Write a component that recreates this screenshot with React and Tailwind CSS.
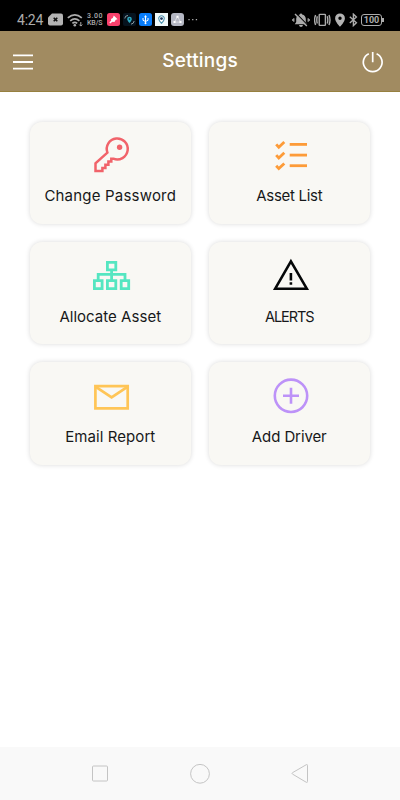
function KeyIcon() {
    return (
        <svg width="40" height="40" viewBox="0 0 40 40" fill="none" stroke="#f1636a" strokeWidth="2.5">
            <path d="M16.4 17.6 4.5 28.2v7.9h6.9v-3.2h3v-3.1h3v-3.2h2.9v-2.9h2A10.5 10.5 0 1 0 16.4 17.6Z" />
            <circle cx="28.6" cy="12.2" r="2.7" fill="#f1636a" stroke="none" />
        </svg>
    );
}

function ListIcon() {
    return (
        <svg width="40" height="40" viewBox="0 0 40 40" fill="none" stroke="#fd9b38" strokeWidth="2.8">
            {[0, 10.7, 21.3].map(y => (
                <g key={y} transform={`translate(0 ${y})`}>
                    <path d="m6.2 9.4 2.6 2.9 5.5-5.2" />
                    <path d="M19.7 9.4H37" />
                </g>
            ))}
        </svg>
    );
}

function TreeIcon() {
    return (
        <svg width="40" height="40" viewBox="0 0 40 40" fill="none" stroke="#55e6c1" strokeWidth="2.8">
            <path d="M16.4 7.4h8.4v7.4h-8.4zM3.4 25.7h7.7v8h-7.7zM16.4 25.7h8.4v8h-8.4zM30.2 25.7h7.5v8h-7.5z" />
            <path d="M20.6 15v10M7.2 25v-5.7H34V25" />
        </svg>
    );
}

function AlertIcon() {
    return (
        <svg width="40" height="40" viewBox="0 0 40 40" fill="none" stroke="#050708" strokeWidth="2.6">
            <path d="M20.9 6.4 5.2 33.7h31.6Z" />
            <path d="M20.9 18v7.4M20.9 27.2v2.6" />
        </svg>
    );
}

function MailIcon() {
    return (
        <svg width="40" height="40" viewBox="0 0 40 40" fill="none" stroke="#ffc556" strokeWidth="2.7">
            <path d="M4.4 10.2h32.3v22.1H4.4z" />
            <path d="m4.8 10.8 15.8 10.6 15.8-10.6" />
        </svg>
    );
}

function AddIcon() {
    return (
        <svg width="40" height="40" viewBox="0 0 40 40" fill="none" stroke="#bd92f8" strokeWidth="2.6">
            <circle cx="21" cy="19.8" r="16.2" />
            <path d="M21 11.8v16M13 19.8h16" />
        </svg>
    );
}

const tiles = [
    { title: "Change Password", icon: KeyIcon, spacing: "text-[15px] tracking-[0.2px]" },
    { title: "Asset List", icon: ListIcon, spacing: "text-[15px] tracking-[-0.3px]" },
    { title: "Allocate Asset", icon: TreeIcon, spacing: "text-[15px] tracking-[0.03px]" },
    { title: "ALERTS", icon: AlertIcon, spacing: "text-[14.5px] tracking-[-1.1px]" },
    { title: "Email Report", icon: MailIcon, spacing: "text-[15px] tracking-[0.08px]" },
    { title: "Add Driver", icon: AddIcon, spacing: "text-[15px] tracking-[-0.1px]" },
];

function StatusBar() {
    return (
        <div className="flex h-[31px] items-center bg-black pt-[8px] pl-[17px] text-[#acacac]">
            <span className="w-[31px] pt-px font-['Roboto',sans-serif] text-[14px] leading-none tracking-[-0.2px]">4:24</span>
            <svg width="15" height="13" viewBox="0 0 15 13">
                <path d="M4 0.5h9a2 2 0 0 1 2 2v8a2 2 0 0 1-2 2H2a2 2 0 0 1-2-2V4.5Z" fill="#b4b4b4" />
                <path d="m5.7 4.7 3.6 3.6m0-3.6L5.7 8.3" stroke="#111" strokeWidth="1.6" />
            </svg>
            <svg className="ml-1" width="17" height="14" viewBox="0 0 17 14" fill="none" stroke="#acacac" strokeWidth="1.7">
                <path d="M.8 4.8q7-6 14 0M3.2 7.8q4.6-4 9.2 0M5.4 10.4q2.4-2 4.8 0" />
                <circle cx="7.8" cy="12.2" r="1.3" fill="#acacac" stroke="none" />
                <path d="M13.8 9v4m-1.5-1.4 1.5 1.5 1.5-1.5" strokeWidth="1" />
            </svg>
            <span className="ml-[3px] flex w-[16px] flex-col font-['Roboto',sans-serif] text-[7px] leading-[7px] font-medium whitespace-nowrap">
                <span className="tracking-[0.5px]">3.00</span>
                <span className="tracking-[-0.1px]">KB/S</span>
            </span>
            <svg className="ml-[4px]" width="13" height="13" viewBox="0 0 13 13">
                <rect width="13" height="13" rx="2.5" fill="#fa416c" />
                <path d="m6.8 2.6 3.8 3.6-1.8.6-1.4 2.2-2-.2-2.2 1.6-.8-.8 1.8-2-.2-1.6 1.8-1Z" fill="#fff" />
            </svg>
            <svg className="ml-[3px]" width="13" height="13" viewBox="0 0 13 13">
                <rect width="13" height="13" rx="2" fill="#06131e" />
                <path d="M6.5 3.7a2.3 2.3 0 0 1 2.3 2.3c0 1.7-2.3 4-2.3 4S4.2 7.7 4.2 6a2.3 2.3 0 0 1 2.3-2.3Z" fill="#2faac0" />
                <circle cx="6.5" cy="6" r=".8" fill="#06131e" />
                <path d="M1.8 5.5q0-3 3.2-3M11.2 8q-.4 2.8-3.2 3.2" stroke="#8c9ba1" fill="none" />
            </svg>
            <svg className="ml-[3px]" width="13" height="13" viewBox="0 0 13 13">
                <rect width="13" height="13" rx="2.5" fill="#087cf9" />
                <path d="M6.5 3v7M4 5v2.3l2.5 1.2L9 7.3V5" stroke="#fff" fill="none" />
                <path d="M5 4.2 6.5 2 8 4.2Z" fill="#fff" />
                <circle cx="6.5" cy="10.3" r="1" fill="#fff" />
            </svg>
            <svg className="ml-[3px]" width="13" height="13" viewBox="0 0 13 13">
                <rect width="13" height="13" fill="#eef8fa" />
                <path d="M6.5 2.7a2.8 2.8 0 0 1 2.8 2.8c0 2-2.8 4.8-2.8 4.8S3.7 7.5 3.7 5.5a2.8 2.8 0 0 1 2.8-2.8Z" fill="#fff" stroke="#4b93ae" strokeWidth="1.1" />
                <circle cx="6.5" cy="5.6" r="1.4" fill="#213f67" />
            </svg>
            <svg className="ml-[3px]" width="13" height="13" viewBox="0 0 13 13">
                <rect width="13" height="13" rx="3" fill="#b4b7c3" />
                <path d="m6.5 3.3-3 5.8m3-5.8 3 5.8m-6 0h6" stroke="#e4e5e9" strokeWidth=".8" />
                <path d="M5.5 2.8h2v2h-2zM2.5 8h2v2h-2zM8.5 8h2v2h-2z" fill="#fff" />
            </svg>
            <svg className="ml-1" width="10" height="13" viewBox="0 0 10 13" fill="#acacac">
                <path d="M.4 6h1.3v1.3H.4zM4.1 6h1.3v1.3H4.1zM7.8 6h1.3v1.3H7.8z" />
            </svg>
            <svg className="ml-[94px]" width="18" height="14" viewBox="0 0 18 14">
                <path d="M2.8 11.3 4.2 9V5.8A4.8 4.8 0 0 1 7.8 1.6a1.2 1.2 0 0 1 2.4 0 4.8 4.8 0 0 1 3.6 4.2V9l1.4 2.3Z" fill="#acacac" />
                <path d="M7 12h4q-.4 1.9-2 1.9T7 12Z" fill="#acacac" />
                <path d="M1.8 5.2v3.6M.5 6.2v1.6M16.2 5.2v3.6M17.5 6.2v1.6" stroke="#acacac" strokeWidth="1.2" />
                <path d="m4.2.4 11.4 11.8" stroke="#000" strokeWidth="1.2" />
                <path d="m3 1 11.8 12" stroke="#acacac" strokeWidth="1.4" />
            </svg>
            <svg className="ml-1" width="17" height="14" viewBox="0 0 17 14" fill="none" stroke="#acacac" strokeWidth="1.4">
                <rect x="5.2" y="1.4" width="6.2" height="11" rx=".7" />
                <path d="M3.3 3.3q-1 3.7 0 7.2M13.3 3.3q1 3.7 0 7.2M1.6 2q-2 5 0 10M15 2q2 5 0 10" />
            </svg>
            <svg className="ml-1" width="10" height="14" viewBox="0 0 10 14">
                <path fillRule="evenodd" d="M5 .4a4.9 4.9 0 0 1 4.9 4.9C9.9 9 5 13.8 5 13.8S.1 9 .1 5.3A4.9 4.9 0 0 1 5 .4Zm0 3.2a1.7 1.7 0 1 0 0 3.4 1.7 1.7 0 0 0 0-3.4Z" fill="#b4b4b4" />
            </svg>
            <svg className="ml-1" width="9" height="14" viewBox="0 0 9 14" fill="none" stroke="#acacac" strokeWidth="1.4">
                <path d="m.8 3.8 6.6 6-3 2.8V1.2l3 2.9-6.6 6" />
            </svg>
            <div className="ml-[3px] flex h-[12px] w-[21px] items-center justify-center rounded-[3px] border border-[#acacac] pt-px font-['Roboto',sans-serif] text-[9px] leading-none font-bold">
                100
            </div>
            <div className="h-1 w-[1.5px] bg-[#acacac]" />
        </div>
    );
}

function Header() {
    return (
        <header className="flex h-[61px] items-center justify-between border-b border-[#97803f] bg-[#a18b61] pr-[16px] pl-[13px] text-white">
            <svg width="20" height="20" viewBox="0 0 20 20" stroke="white" strokeWidth="1.8">
                <path d="M0 4.3h20M0 11h20M0 17.7h20" />
            </svg>
            <h1 className="mb-px ml-[6px] font-['Inter','Open_Sans',sans-serif] text-[19px] leading-none font-medium tracking-[0.2px]">Settings</h1>
            <svg width="23" height="23" viewBox="0 0 23 23" fill="none" stroke="white" strokeWidth="1.7">
                <path d="M7.8 3.7a9.4 9.4 0 1 0 7.8 0M11.7 2.1v10.2" />
            </svg>
        </header>
    );
}

function Tile({ tile }) {
    const Icon = tile.icon;

    return (
        <button
            type="button"
            className="flex flex-col items-center rounded-[12px] bg-[#f9f8f4] pt-[13.5px] shadow-[0_0_5px_rgba(0,0,0,0.15)]"
        >
            <span className="ml-px block h-10">
                <Icon />
            </span>
            <span className={`mt-[11.3px] font-['Inter','Open_Sans',sans-serif] leading-5 whitespace-nowrap text-[#17181a] ${tile.spacing}`}>
                {tile.title}
            </span>
        </button>
    );
}

function NavBar() {
    return (
        <nav className="flex h-[53px] items-center justify-between bg-[#f9f9f9] px-[90px]">
            <svg width="20" height="20" viewBox="0 0 20 20" fill="none" stroke="#c4c4c4">
                <rect x="2.5" y="2" width="15" height="15" rx="1" />
            </svg>
            <svg width="20" height="20" viewBox="0 0 20 20" fill="none" stroke="#c4c4c4">
                <circle cx="10" cy="9.8" r="9.4" />
            </svg>
            <svg width="20" height="20" viewBox="0 0 20 20" fill="none" stroke="#c4c4c4" strokeLinejoin="round">
                <path d="M16.3.7 2.5 8.7q-1 .7 0 1.4l13.8 8.2q1.2.5 1.2-.8V1.3q0-1.1-1.2-.6Z" />
            </svg>
        </nav>
    );
}

function App() {
    return (
        <div className="flex h-[800px] w-[400px] flex-col overflow-hidden bg-white">
            <StatusBar />
            <Header />
            <main className="grid flex-1 auto-rows-[102.5px] grid-cols-[161.5px_161.5px] content-start gap-x-[17.5px] gap-y-[17.75px] pt-[29.5px] pl-[29.5px]">
                {tiles.map(tile => (
                    <Tile key={tile.title} tile={tile} />
                ))}
            </main>
            <NavBar />
        </div>
    );
}

export default App;
